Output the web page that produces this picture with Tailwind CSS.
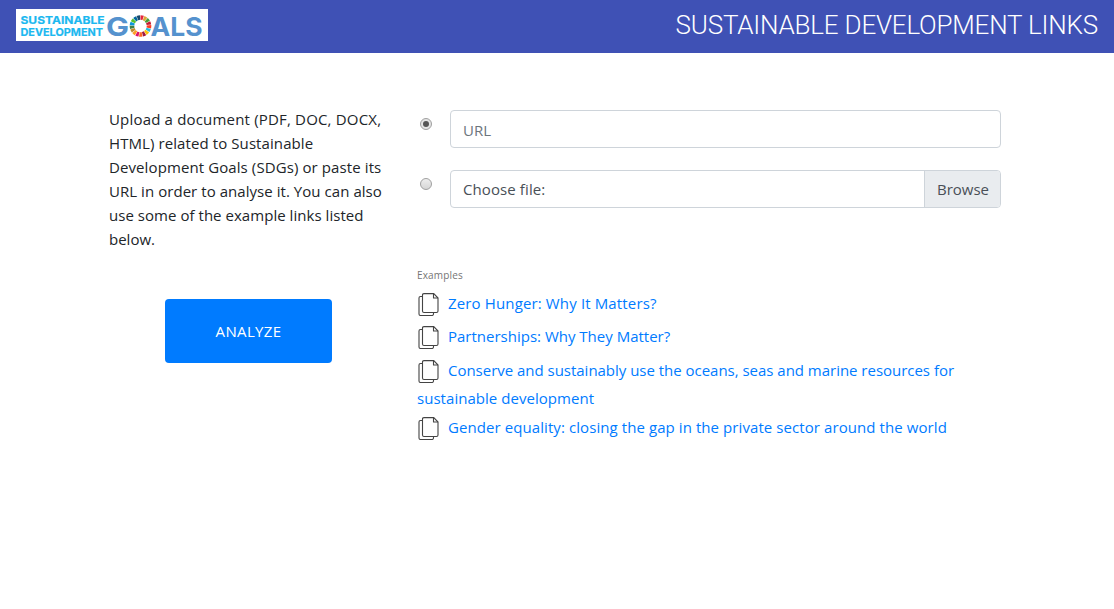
<!DOCTYPE html>
<html lang="en">
<head>
<meta charset="utf-8">
<title>Sustainable Development Links</title>
<script src="https://cdn.jsdelivr.net/npm/@tailwindcss/browser@4"></script>
</head>
<body class="h-[609px] overflow-hidden bg-white font-['Open_Sans',sans-serif] text-[15px] leading-6 font-[370] text-[#212529]">
<svg width="0" height="0" class="absolute">
  <symbol id="pages" viewBox="0 0 21 23" fill="none" stroke="#444" stroke-width="1.100" stroke-linejoin="round">
    <path d="M4.500 3.500H2.500Q1 3.500 1 5V21Q1 22.500 2.500 22.500H14Q15.500 22.500 15.500 21V19.500"/>
    <path d="M6 .6H15.800L20 5V18Q20 19.500 18.500 19.500H6Q4.500 19.500 4.500 18V2Q4.500 .6 6 .6Z"/>
    <path d="M15.500 .6V5H20"/>
  </symbol>
</svg>
<header class="flex h-[53px] items-start justify-between bg-[#3f51b5] pl-4 pr-4">
  <svg class="mt-[9px] bg-white" width="192" height="32" viewBox="0 0 192 32" font-family="Inter,sans-serif">
    <g fill="#1cb8f0" font-size="11" font-weight="700" stroke="#1cb8f0" stroke-width=".2">
      <text x="4.500" y="15.300" textLength="84" lengthAdjust="spacingAndGlyphs">SUSTAINABLE</text>
      <text x="4.500" y="26.500" textLength="82.500" lengthAdjust="spacingAndGlyphs">DEVELOPMENT</text>
    </g>
    <g fill="#5592ce" font-size="26" font-weight="700">
      <text x="90" y="26.500" textLength="23" lengthAdjust="spacingAndGlyphs">G</text>
      <text x="134.500" y="26.500" textLength="52" lengthAdjust="spacingAndGlyphs">ALS</text>
    </g>
    <g id="wheel" fill="none" stroke-width="4.600"></g>
  </svg>
  <h1 class="font-[Roboto] text-[26px] font-light leading-[51px] tracking-[-0.2px] text-white">SUSTAINABLE DEVELOPMENT LINKS</h1>
</header>
<main class="flex pl-[109px] pt-[54px]">
  <section class="w-[308px]">
    <p class="whitespace-nowrap">
      <span class="block tracking-[0.18px]">Upload a document (PDF, DOC, DOCX,</span>
      <span class="block tracking-[0.09px]">HTML) related to Sustainable</span>
      <span class="block tracking-[0.1px]">Development Goals (SDGs) or paste its</span>
      <span class="block tracking-[0.05px]">URL in order to analyse it. You can also</span>
      <span class="block tracking-[0.04px]">use some of the example links listed</span>
      <span class="block">below.</span>
    </p>
    <button class="ml-14 mt-12 block h-16 w-[167px] rounded bg-[#007bff] tracking-[0.35px] text-white">ANALYZE</button>
  </section>
  <section class="w-[584px] pt-[3px]">
    <div class="flex">
      <span class="ml-[3px] mt-2 flex size-3 items-center justify-center rounded-full border border-[#a0a0a0] bg-[#e4e4e4]"><i class="size-1.5 rounded-full bg-[#555]"></i></span>
      <div class="ml-[18px] flex h-[38px] flex-1 items-center rounded border border-[#ced4da] pl-3 pt-0.5 text-[#6c757d]"><span>URL</span></div>
    </div>
    <div class="mt-[22px] flex">
      <span class="ml-[3px] mt-2 size-3 rounded-full border border-[#a0a0a0] bg-gradient-to-b from-[#eee] to-[#d6d6d6]"></span>
      <div class="ml-[18px] flex h-[38px] flex-1 overflow-hidden rounded border border-[#ced4da] leading-9 text-[#495057]">
        <span class="flex-1 pl-3 tracking-[0.1px]">Choose file:</span>
        <span class="w-[76px] border-l border-[#ced4da] bg-[#e9ecef] pl-3">Browse</span>
      </div>
    </div>
    <div class="mt-[59px] text-[10px] leading-4 tracking-[0.15px] text-[#757575]">Examples</div>
    <ul class="whitespace-nowrap text-[#007bff]">
      <li class="mt-2 flex h-[25px] gap-[9px]"><svg class="ml-px mt-0.5 h-[23px] w-[21px]"><use href="#pages"/></svg><a class="tracking-[0.14px]">Zero Hunger: Why It Matters?</a></li>
      <li class="mt-2 flex h-[25px] gap-[9px]"><svg class="ml-px mt-0.5 h-[23px] w-[21px]"><use href="#pages"/></svg><a>Partnerships: Why They Matter?</a></li>
      <li class="mt-[9px]"><div class="flex h-[25px] gap-[9px]"><svg class="ml-px mt-0.5 h-[23px] w-[21px]"><use href="#pages"/></svg><a class="tracking-[-0.02px]">Conserve and sustainably use the oceans, seas and marine resources for</a></div><a class="mt-[3px] block w-fit tracking-[0.04px]">sustainable development</a></li>
      <li class="mt-[5px] flex h-[25px] gap-[9px]"><svg class="ml-px mt-0.5 h-[23px] w-[21px]"><use href="#pages"/></svg><a class="tracking-[0.08px]">Gender equality: closing the gap in the private sector around the world</a></li>
    </ul>
  </section>
</main>
<script>
const colors=['#e5243b','#dda63a','#4c9f38','#c5192d','#ff3a21','#26bde2','#fcc30b','#a21942','#fd6925','#dd1367','#fd9d24','#bf8b2e','#3f7e44','#0a97d9','#56c02b','#00689d','#19486a'];
const wheel=document.getElementById('wheel'),r=8.500,cx=124.500,cy=17;
colors.forEach((c,i)=>{
  const p=document.createElementNS('http://www.w3.org/2000/svg','path'),s=2*Math.PI/17,a=i*s-Math.PI/2,b=a+s*.86;
  p.setAttribute('d',`M${cx+r*Math.cos(a)} ${cy+r*Math.sin(a)}A${r} ${r} 0 0 1 ${cx+r*Math.cos(b)} ${cy+r*Math.sin(b)}`);
  p.setAttribute('stroke',c);wheel.append(p);
});
</script>
</body>
</html>
